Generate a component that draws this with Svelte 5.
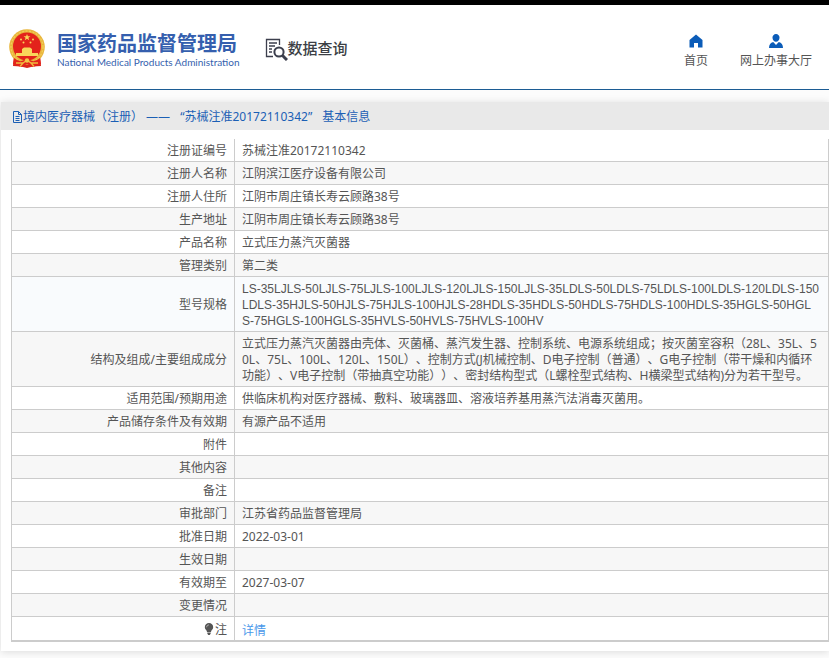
<script>
  const rows = [
    ['注册证编号', '苏械注准20172110342'],
    ['注册人名称', '江阴滨江医疗设备有限公司'],
    ['注册人住所', '江阴市周庄镇长寿云顾路38号'],
    ['生产地址', '江阴市周庄镇长寿云顾路38号'],
    ['产品名称', '立式压力蒸汽灭菌器'],
    ['管理类别', '第二类'],
    ['型号规格', 'LS-35LJLS-50LJLS-75LJLS-100LJLS-120LJLS-150LJLS-35LDLS-50LDLS-75LDLS-100LDLS-120LDLS-150\nLDLS-35HJLS-50HJLS-75HJLS-100HJLS-28HDLS-35HDLS-50HDLS-75HDLS-100HDLS-35HGLS-50HGL\nS-75HGLS-100HGLS-35HVLS-50HVLS-75HVLS-100HV'],
    ['结构及组成/主要组成成分', '立式压力蒸汽灭菌器由壳体、灭菌桶、蒸汽发生器、控制系统、电源系统组成；按灭菌室容积（28L、35L、50L、75L、100L、120L、150L）、控制方式(J机械控制、D电子控制（普通）、G电子控制（带干燥和内循环功能）、V电子控制（带抽真空功能））、密封结构型式（L螺栓型式结构、H横梁型式结构)分为若干型号。'],
    ['适用范围/预期用途', '供临床机构对医疗器械、敷料、玻璃器皿、溶液培养基用蒸汽法消毒灭菌用。'],
    ['产品储存条件及有效期', '有源产品不适用'],
    ['附件', ''],
    ['其他内容', ''],
    ['备注', ''],
    ['审批部门', '江苏省药品监督管理局'],
    ['批准日期', '2022-03-01'],
    ['生效日期', ''],
    ['有效期至', '2027-03-07'],
    ['变更情况', '']
  ];
</script>

<header>
  <a class="brand" href="#home">
    <svg class="emblem" viewBox="0 0 38 42" aria-hidden="true">
      <path d="M6 28 L5 38 L13 38.500 L19 40 L25 38.500 L33 38 L32 28Z" fill="#d9261c" />
      <circle cx="19" cy="19" r="17.800" fill="#e9b63c" />
      <circle cx="19" cy="19" r="16" fill="none" stroke="#f3cd5c" stroke-width="1.200" stroke-dasharray="2 1.500" />
      <circle cx="19" cy="18.500" r="14" fill="#e3231b" />
      <path d="M19 6l.9 2.300h2.500l-2 1.500.8 2.400-2.200-1.500-2.200 1.500.8-2.400-2-1.500h2.500z" fill="#f9d65a" />
      <g fill="#f9d65a">
        <circle cx="13" cy="11.500" r="1" /><circle cx="15.500" cy="14.500" r="1" />
        <circle cx="22.500" cy="14.500" r="1" /><circle cx="25" cy="11.500" r="1" />
        <path d="M14 21l2-1.500h6l2 1.500v1H14zM14 22h10v3H14zM8 25h22v3H8z" />
      </g>
      <path d="M6 30q6 5 10 2l3-1 3 1q4 3 10-2l1 6-8 3-6-3-6 3-8-3z" fill="#e3231b" />
      <path d="M8 35l7 0 4-3 4 3 7 0M12 38.500l3-3.500M26 38.500l-3-3.500" fill="none" stroke="#f0bd3f" stroke-width="1.300" />
      <circle cx="19" cy="32.500" r="2.200" fill="#f3c648" />
    </svg>
    <span class="names">
      <span class="cn">国家药品监督管理局</span>
      <span class="en">National Medical Products Administration</span>
    </span>
  </a>
  <div class="section">
    <svg width="23" height="23" viewBox="0 0 23 23" fill="none" stroke="#3c3f4d" aria-hidden="true">
      <path d="M8 18.500H1.500V1.500H14.500V7" stroke-width="1.300" />
      <path d="M4 5h8M4 8h6M4 11h3M4 14h3" stroke-width="1.300" />
      <circle cx="14" cy="14" r="4.600" stroke-width="2" />
      <path d="M17.500 17.500l4.500 4.500" stroke-width="3" />
    </svg>
    <span>数据查询</span>
  </div>
  <nav>
    <a href="#index">
      <svg width="14" height="14" viewBox="0 0 14 14" aria-hidden="true"><path d="M7 .5L.5 6v7.500H5V9h4v4.500h4.500V6z" fill="#0b5cb8" /></svg>
      <span>首页</span>
    </a>
    <a href="#hall">
      <svg width="14" height="14" viewBox="0 0 14 14" aria-hidden="true"><path d="M7 0a3.500 3.500 0 0 1 3.500 3.800C10.500 6 9 7.800 7 7.800S3.500 6 3.500 3.800A3.500 3.500 0 0 1 7 0zM0 14c0-3.500 1.500-5.300 4.200-6L7 11l2.800-3c2.700.7 4.200 2.500 4.200 6z" fill="#0b5cb8" /></svg>
      <span>网上办事大厅</span>
    </a>
  </nav>
</header>

<main>
  <h1>
    <svg width="11" height="12" viewBox="0 0 11 12" fill="none" stroke="#1b5fb5" aria-hidden="true">
      <path d="M1.500.5H6.500L9.500 3.500V11.500H1.500ZM6.500.5V3.500H9.500M3.500 5.500H7.500M3.500 7.500H7.500M3.500 9.500H7.500" />
    </svg>
    <span class="title">
      <span>境内医疗器械（注册） ——</span>
      <span>“苏械注准20172110342”</span>
      <span>基本信息</span>
    </span>
  </h1>
  <div class="sheet">
    <table>
      <tbody>
        {#each rows as [label, value]}
          <tr class:active={label === '型号规格'}>
            <th scope="row">{label}</th>
            <td>{value}</td>
          </tr>
        {/each}
        <tr class="note">
          <th scope="row">
            <svg width="10" height="12" viewBox="0 0 10 12" aria-hidden="true"><path d="M5 0a4.200 4.200 0 0 1 4.200 4.300C9.200 6.500 7 7.300 7 9H3C3 7.300.8 6.500.8 4.300A4.200 4.200 0 0 1 5 0zM3.300 9.500h3.400v1L5.800 12H4.200L3.300 10.500z" fill="#555" /><path d="M2.500 4.300Q2.700 2 5 1.800" stroke="#ccc" stroke-width=".7" fill="none" /></svg>注
          </th>
          <td><a href="#detail">详情</a></td>
        </tr>
      </tbody>
    </table>
  </div>
</main>

<style>
  :global(body) {
    background: #fcfcfc;
    font: 12px/16px "Noto Sans", "Noto Sans CJK SC", sans-serif;
    font-kerning: none;
    text-spacing-trim: space-all;
    color: #555;
  }
  header {
    display: flex;
    align-items: center;
    box-sizing: border-box;
    height: 90px;
    padding: 4px 17px 0 8px;
    background: #fff;
    border-top: 5px solid #000;
    border-bottom: 1px solid #1c5c94;
  }
  a {
    text-decoration: none;
  }
  .brand {
    display: flex;
    gap: 11px;
    align-items: center;
    color: #355fae;
  }
  .emblem {
    width: 38px;
    height: 42px;
  }
  .names {
    display: flex;
    flex-direction: column;
    padding-top: 2px;
  }
  .cn {
    font: bold 20px/24px "Noto Sans CJK SC", sans-serif;
  }
  .en {
    font: 10px/14px Lato, sans-serif;
  }
  .section {
    display: flex;
    align-items: center;
    margin-left: 25px;
    color: #3c3f45;
    font: 500 15px/20px "Noto Sans CJK SC", sans-serif;
  }
  .section span {
    padding-bottom: 2px;
  }
  nav {
    display: flex;
    gap: 32px;
    margin-left: auto;
  }
  nav a {
    display: flex;
    flex-direction: column;
    align-items: center;
    gap: 5px;
    padding-top: 5px;
    color: #555;
  }
  main {
    margin: 12px 0 8px 1px;
    padding-bottom: 9px;
    background: #fff;
    box-shadow: 0 1px 8px #0002;
  }
  h1 {
    display: flex;
    align-items: center;
    box-sizing: border-box;
    height: 28px;
    margin: 0;
    padding: 2px 0 0 11px;
    background: #e9e9e9;
    color: #1b5fb5;
    font-size: 12px;
    font-weight: normal;
  }
  .title {
    display: flex;
    gap: 10px;
  }
  .sheet {
    padding: 9px 0 0 10px;
  }
  table {
    width: 100%;
    border-spacing: 0;
    border: solid #ccc;
    border-width: 0 1px 1px 1px;
  }
  th,
  td {
    padding: 4px 7px 2px;
    height: 16px;
    border-bottom: 1px solid #ccc;
    word-break: break-all;
    font-weight: normal;
  }
  td {
    white-space: pre-line;
  }
  th {
    width: 208px;
    text-align: right;
    border-right: 1px solid #ccc;
  }
  tr:nth-child(even) {
    background: #f7f7f7;
  }
  tr.active {
    background: #f9fbfd;
  }
  tr.active td {
    font-family: "Liberation Sans", sans-serif;
  }
  tr.note td {
    padding-top: 6px;
    padding-bottom: 1px;
  }
  th svg {
    margin-right: 1px;
    vertical-align: -1px;
  }
  td a {
    color: #4a98ea;
  }
</style>
